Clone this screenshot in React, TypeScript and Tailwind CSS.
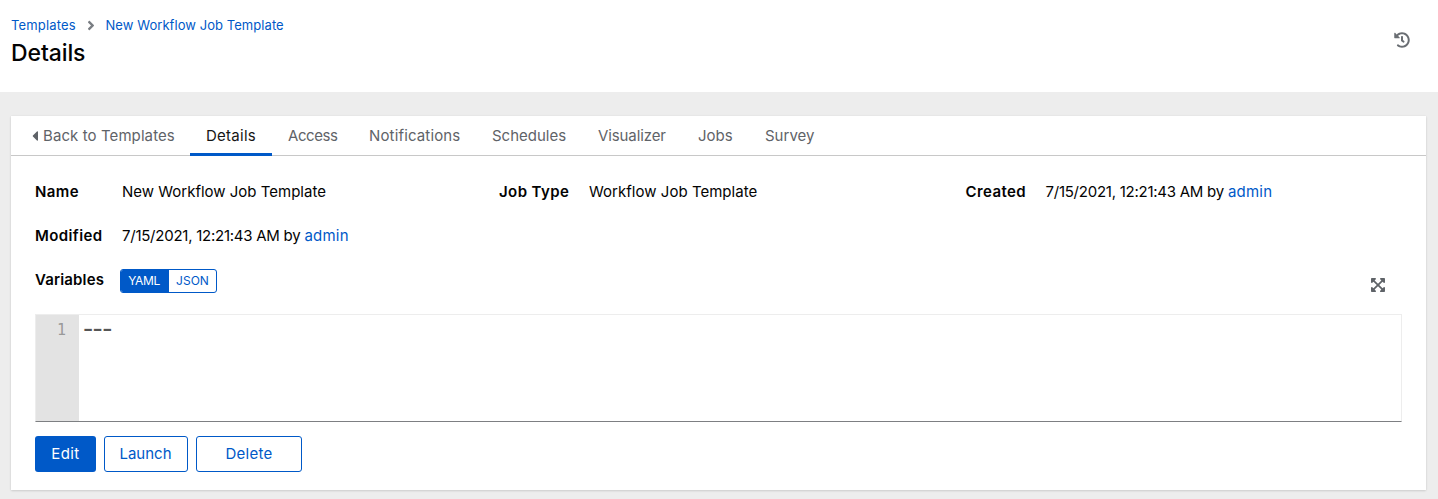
import React from 'react';
import { FaAngleRight, FaCaretLeft, FaExpandArrowsAlt, FaHistory } from 'react-icons/fa';

const tabs = [
  { label: 'Details', cls: 'w-[82px] tracking-[0.26px]', active: true },
  { label: 'Access', cls: 'w-[81px] tracking-[-0.42px]' },
  { label: 'Notifications', cls: 'w-[123px] tracking-[0.15px]' },
  { label: 'Schedules', cls: 'w-[106px]' },
  { label: 'Visualizer', cls: 'w-[100px] tracking-[-0.1px]' },
  { label: 'Jobs', cls: 'w-[67px]' },
  { label: 'Survey', cls: 'w-[82px]' },
];

function Label({ children, className }: { children: string; className: string }) {
  return <dt className={`shrink-0 font-semibold ${className}`}>{children}</dt>;
}

function Timestamp() {
  return (
    <dd className="flex">
      <span className="w-[182.5px] tracking-[-0.25px]">7/15/2021, 12:21:43 AM by</span>
      <a href="#" className="tracking-[0.2px] text-[#0059c8]">admin</a>
    </dd>
  );
}

export default function App() {
  return (
    <div className="h-[499px] overflow-hidden bg-[#ededed] font-['Inter',sans-serif] text-[15px] leading-6 whitespace-nowrap text-[#030303]">
      <header className="flex h-[92px] justify-between bg-white pr-7 pl-[11px]">
        <div className="pt-[15px]">
          <nav className="flex h-5 items-center text-[13px] leading-5 text-[#0059c8]">
            <a href="#" className="w-[77px] tracking-[0.15px]">Templates</a>
            <FaAngleRight className="mr-[11.5px] h-[13px] w-[6px] scale-125 text-[#7a7e83]" />
            <a href="#" className="tracking-[0.06px]">New Workflow Job Template</a>
          </nav>
          <h1 className="mt-0.5 text-[23px] leading-8 font-medium tracking-[-0.1px]">Details</h1>
        </div>
        <button className="mt-8 size-4 text-[#6a6e73]" aria-label="History">
          <FaHistory className="size-4" />
        </button>
      </header>

      <main className="mt-6 mr-3 ml-[11px] h-[374px] bg-white shadow-[0_1px_2px_rgba(3,3,3,0.12),0_0_2px_rgba(3,3,3,0.06)]">
        <nav className="flex h-10 border-b border-[#c8c8c8] pl-[21px] text-[#5f6368]">
          <a href="#" className="flex h-10 w-[158px] items-center tracking-[0.09px]">
            <FaCaretLeft className="mr-[5px] h-4 w-[6px] shrink-0" />
            Back to Templates
          </a>
          {tabs.map((t) => (
            <a
              key={t.label}
              href="#"
              className={`h-10 pt-2 pl-4 ${t.cls} ${t.active ? 'border-b-[3px] border-[#0059c8] text-[#151515]' : ''}`}
            >
              {t.label}
            </a>
          ))}
        </nav>

        <div className="px-6 pt-6">
          <dl className="grid grid-cols-[464px_466.5px_1fr] gap-y-5">
            <div className="flex">
              <Label className="w-[87px] tracking-[0.4px]">Name</Label>
              <dd>New Workflow Job Template</dd>
            </div>
            <div className="flex">
              <Label className="w-[90px] tracking-[0.4px]">Job Type</Label>
              <dd className="tracking-[0.03px]">Workflow Job Template</dd>
            </div>
            <div className="flex">
              <Label className="w-20 tracking-[0.4px]">Created</Label>
              <Timestamp />
            </div>
            <div className="flex">
              <Label className="w-[87px] tracking-[0.4px]">Modified</Label>
              <Timestamp />
            </div>
          </dl>

          <div className="mt-5 flex h-[46px] items-start">
            <span className="w-[85px] font-semibold tracking-[0.15px]">Variables</span>
            <div className="mt-px flex h-6 w-[97px] overflow-hidden rounded-[3px] border border-[#0059c8] text-[12px] leading-[22px]">
              <button className="w-12 bg-[#0059c8] pr-[2px] text-center tracking-[-0.4px] text-white">YAML</button>
              <button className="flex-1 text-center text-[#0059c8]">JSON</button>
            </div>
            <button className="mt-[10px] mr-[17px] ml-auto size-[14px] text-[#5f6368]" aria-label="Expand">
              <FaExpandArrowsAlt className="size-[14px] scale-[1.14]" />
            </button>
          </div>

          <div className="flex h-[108px] border border-[#ededed] border-b-[#7d7f82]">
            <div className="w-[43px] bg-[#e3e3e3] pt-[3px] pr-[13px] text-right font-['DejaVu_Sans_Mono',monospace] text-[15px] text-[#999]">1</div>
            <code className="pt-[3px] pl-px font-['Liberation_Mono',monospace] text-[27px] tracking-[-6.6px] text-[#555]">---</code>
          </div>

          <div className="mt-[14px] flex gap-2 text-[#0059c8]">
            <button className="h-9 w-[61px] rounded-[3px] bg-[#0059c8] tracking-[0.4px] text-white">Edit</button>
            <button className="h-9 w-[84px] rounded-[3px] border border-[#0059c8] pr-px">Launch</button>
            <button className="h-9 w-[106px] rounded-[3px] border border-[#0059c8] tracking-[0.25px]">Delete</button>
          </div>
        </div>
      </main>
    </div>
  );
}
